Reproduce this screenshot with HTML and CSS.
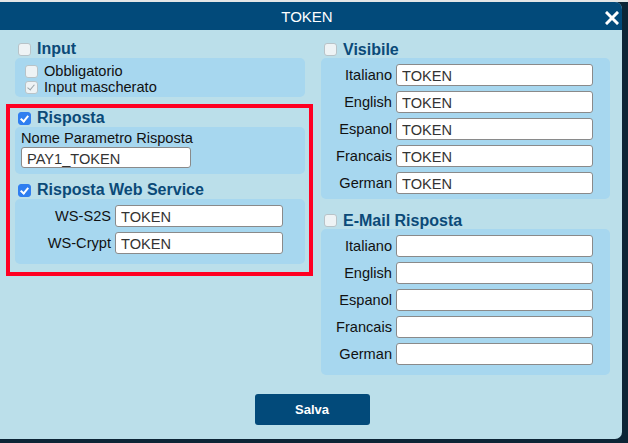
FILE: index.html
```html
<!DOCTYPE html>
<html lang="it">
<head>
    <meta charset="UTF-8">
    <meta name="viewport" content="width=device-width, initial-scale=1.0">
    <title>TOKEN</title>
    <link rel="stylesheet" href="styles.css">
</head>
<body>
    <div class="dialog">
        <div class="dialog-title">
            <span>TOKEN</span>
            <button class="close" aria-label="Chiudi">
                <svg width="14" height="14" viewBox="0 0 14 14"><path d="M2 2 L12 12 M12 2 L2 12" stroke="#fff" stroke-width="3" stroke-linecap="square"/></svg>
            </button>
        </div>

        <div class="dialog-body">
            <div class="col col-left">
                <div class="group">
                    <div class="group-head"><span class="cb"></span>Input</div>
                    <div class="panel panel-list">
                        <div class="opt"><span class="cb"></span>Obbligatorio</div>
                        <div class="opt"><span class="cb cb-disabled"></span>Input mascherato</div>
                    </div>
                </div>

                <div class="group highlight">
                    <div class="group-head"><span class="cb cb-on"></span>Risposta</div>
                    <div class="panel panel-param">
                        <div class="field-label">Nome Parametro Risposta</div>
                        <input class="txt txt-param" type="text" value="PAY1_TOKEN">
                    </div>

                    <div class="group-head"><span class="cb cb-on"></span>Risposta Web Service</div>
                    <div class="panel form-grid grid-ws">
                        <label>WS-S2S</label><input class="txt" type="text" value="TOKEN">
                        <label>WS-Crypt</label><input class="txt" type="text" value="TOKEN">
                    </div>
                </div>
            </div>

            <div class="col col-right">
                <div class="group-head"><span class="cb"></span>Visibile</div>
                <div class="panel form-grid grid-lang">
                    <label>Italiano</label><input class="txt" type="text" value="TOKEN">
                    <label>English</label><input class="txt" type="text" value="TOKEN">
                    <label>Espanol</label><input class="txt" type="text" value="TOKEN">
                    <label>Francais</label><input class="txt" type="text" value="TOKEN">
                    <label>German</label><input class="txt" type="text" value="TOKEN">
                </div>

                <div class="group-head"><span class="cb"></span>E-Mail Risposta</div>
                <div class="panel form-grid grid-lang grid-mail">
                    <label>Italiano</label><input class="txt" type="text" value="">
                    <label>English</label><input class="txt" type="text" value="">
                    <label>Espanol</label><input class="txt" type="text" value="">
                    <label>Francais</label><input class="txt" type="text" value="">
                    <label>German</label><input class="txt" type="text" value="">
                </div>
            </div>
        </div>

        <div class="dialog-foot">
            <button class="btn-save">Salva</button>
        </div>
    </div>
</body>
</html>
```

FILE: styles.css
```css
html {
    background: #0c2536;
}

body {
    margin: 0;
    border-top: 2px solid #e4e6e6;
    font-family: 'Liberation Sans', Arial, sans-serif;
    color: #111;
    height: 441px;
    box-sizing: border-box;
}

.dialog {
    width: 622px;
    height: 437px;
    background: #bbdfea;
    border-radius: 0 7px 7px 0;
    overflow: hidden;
    display: flex;
    flex-direction: column;
}

.dialog-title {
    height: 28px;
    background: #024a7a;
    color: #fff;
    font-size: 15px;
    display: flex;
    align-items: center;
    justify-content: center;
    position: relative;
    padding-right: 8px;
}

.close {
    position: absolute;
    right: 3px;
    top: 9px;
    width: 14px;
    height: 14px;
    padding: 0;
    border: none;
    background: none;
}

.close svg {
    display: block;
}

.dialog-body {
    display: flex;
    padding: 8px 12px 0 6px;
}

.col-left {
    width: 307px;
}

.col-right {
    flex: 1;
    padding-left: 8px;
}

.group {
    padding: 0 8px 0 9px;
}

.group-head {
    height: 20px;
    box-sizing: border-box;
    display: flex;
    align-items: center;
    font-weight: bold;
    font-size: 16px;
    color: #0b4a78;
    padding: 2px 0 0 3px;
}

.group-head .cb {
    margin-top: 0;
}

.col-right .group-head {
    padding-top: 3px;
}

.highlight .group-head {
    height: 19px;
    padding-top: 1px;
}

.cb {
    width: 11px;
    height: 11px;
    border: 1px solid #b8c3c8;
    border-radius: 3px;
    background: #eef3f5;
    margin-right: 6px;
    margin-top: 1px;
    box-sizing: content-box;
    flex: none;
    position: relative;
}

.cb-on {
    background: #2f7ef0;
    border-color: #2f7ef0;
}

.cb-on::after,
.cb-disabled::after {
    content: '';
    position: absolute;
    left: 3px;
    top: 1px;
    width: 3px;
    height: 6px;
    border: solid #fff;
    border-width: 0 2px 2px 0;
    transform: rotate(40deg);
}

.cb-disabled::after {
    border-color: #9aa4a8;
    border-width: 0 1.5px 1.5px 0;
}

.panel {
    background: #a7d7ef;
    border-radius: 5px;
}

.panel-list {
    padding: 5px 6px 2px 10px;
    font-size: 14.6px;
}

.opt {
    display: flex;
    align-items: center;
    height: 16px;
}

.opt .cb {
    margin-right: 6px;
}

.highlight {
    border: 4px solid #ff0022;
    margin-top: 7px;
    padding: 0 4px 8px 5px;
}

.panel-param {
    padding: 3px 6px 6px 6px;
    font-size: 14.6px;
    margin-bottom: 6px;
}

.field-label {
    line-height: 17px;
}

.txt {
    height: 22px;
    box-sizing: border-box;
    border: 1px solid #8a8a8a;
    border-radius: 3px;
    background: #fff;
    font-family: 'Liberation Sans', Arial, sans-serif;
    font-size: 14.6px;
    color: #333;
    padding: 2px 5px 0;
    margin: 0;
    width: 100%;
}

.txt-param {
    width: 170px;
    height: 21px;
    display: block;
}

.form-grid {
    display: grid;
    row-gap: 5px;
    column-gap: 4px;
    align-items: center;
    font-size: 14.6px;
}

.form-grid label {
    text-align: right;
    color: #111;
}

.grid-ws {
    grid-template-columns: 96px 168px;
    padding: 6px 0 10px 0;
}

.grid-lang {
    grid-template-columns: 71px 197px;
    padding: 6px 0 5px 0;
    margin-bottom: 10px;
}

.grid-mail {
    padding-bottom: 10px;
}

.dialog-foot {
    display: flex;
    justify-content: center;
    padding-top: 9px;
}

.btn-save {
    width: 115px;
    height: 31px;
    background: #024a7a;
    color: #fff;
    border: none;
    border-radius: 3px;
    font-family: 'Liberation Sans', Arial, sans-serif;
    font-weight: bold;
    font-size: 13px;
    margin-left: 2px;
}
```
